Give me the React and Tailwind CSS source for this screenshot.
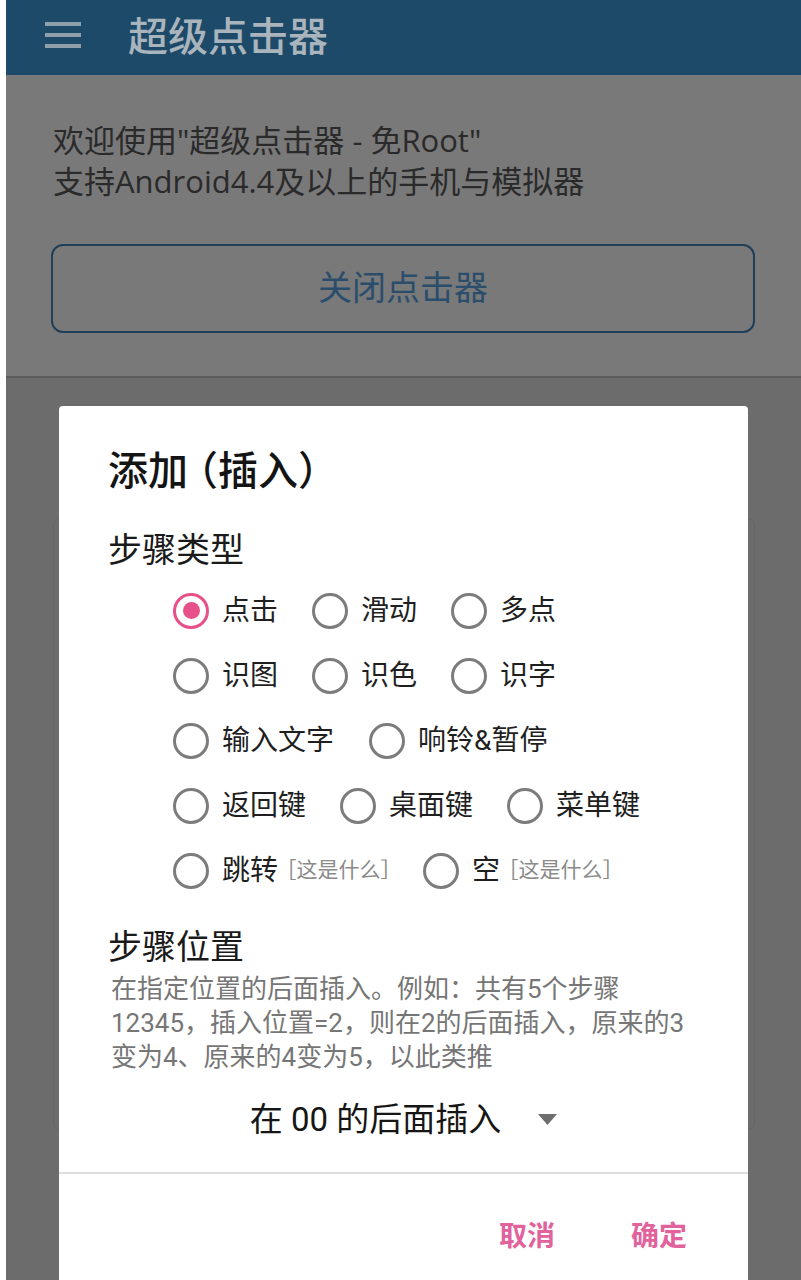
import React from 'react';

const Radio = ({ checked }) => (
  <span
    className={`flex h-[36px] w-[36px] shrink-0 items-center justify-center rounded-full border-[3.5px] ${
      checked ? 'border-[#e8508a]' : 'border-[#7c7c7c]'
    }`}
  >
    {checked && <span className="h-[17px] w-[17px] rounded-full bg-[#e8508a]" />}
  </span>
);

const Option = ({ label, checked, hint }) => (
  <div className="flex items-center">
    <Radio checked={checked} />
    <span className="ml-[13px] text-[28px] leading-none text-[#1f1f1f]">{label}</span>
    {hint && (
      <span className="ml-[8px] text-[21px] leading-none text-[#8a8a8a] [font-feature-settings:'halt']">
        ［这是什么］
      </span>
    )}
  </div>
);

const rows = [
  { gap: 'gap-[34px]', items: [{ label: '点击', checked: true }, { label: '滑动' }, { label: '多点' }] },
  { gap: 'gap-[34px]', items: [{ label: '识图' }, { label: '识色' }, { label: '识字' }] },
  { gap: 'gap-[35px]', items: [{ label: '输入文字' }, { label: '响铃&暂停' }] },
  { gap: 'gap-[34px]', items: [{ label: '返回键' }, { label: '桌面键' }, { label: '菜单键' }] },
  { gap: 'gap-[32px]', items: [{ label: '跳转', hint: true }, { label: '空', hint: true }] },
];

export default function App() {
  return (
    <div className="relative h-[1280px] w-[801px] overflow-hidden bg-white font-['Roboto','Noto_Sans_CJK_SC',sans-serif]">
      {/* page behind the scrim */}
      <div className="ml-[6px] flex h-full flex-col bg-[#6c6c6c]">
        <header className="flex h-[75px] shrink-0 items-start bg-[#1d4a68]">
          <div className="ml-[39px] mt-[22px] flex w-[36px] flex-col gap-[7px]">
            <span className="h-[4px] bg-[#8fa0ab]" />
            <span className="h-[4px] bg-[#8fa0ab]" />
            <span className="h-[4px] bg-[#8fa0ab]" />
          </div>
          <h1 className="ml-[47px] mt-[14px] text-[40px] font-medium leading-[48px] text-[#a9b4bc]">超级点击器</h1>
        </header>

        <section className="border-b-2 border-[#5c5c5c] bg-[#797979] pb-[43px] pl-[47px] pr-[46px] pt-[45px]">
          <div className="font-['Open_Sans','Noto_Sans_CJK_SC',sans-serif] text-[31px] leading-[41px] text-[#2a2a2a]">
            <p>{'欢迎使用"超级点击器 - 免Root"'}</p>
            <p>支持Android4.4及以上的手机与模拟器</p>
          </div>
          <div className="-ml-[2px] mt-[42px] flex h-[89px] items-center justify-center rounded-[12px] border-2 border-[#1f3f58] text-[34px] text-[#2b4d6c]">
            关闭点击器
          </div>
        </section>

        <div className="flex-1">
          <div className="ml-[47px] mr-[46px] mt-[141px] h-[610px] rounded-[6px] border border-[#666666]" />
        </div>
      </div>

      {/* dialog */}
      <div className="absolute bottom-0 left-[59px] top-[406px] flex w-[689px] flex-col rounded-t-[4px] bg-white">
        <div className="pl-[49px] pr-[40px]">
          <h2 className="mt-[42px] text-[40px] font-medium leading-[48px] text-[#141414] [font-feature-settings:'halt']">
            添加<span className="ml-[10px]">（插入）</span>
          </h2>
          <h3 className="mt-[32px] text-[34px] leading-[44px] text-[#1a1a1a]">步骤类型</h3>

          <div className="ml-[65px] mt-[6px]">
            {rows.map((row, i) => (
              <div key={i} className={`flex h-[65px] items-center ${row.gap}`}>
                {row.items.map((it) => (
                  <Option key={it.label} {...it} />
                ))}
              </div>
            ))}
          </div>

          <h3 className="mt-[22px] text-[34px] leading-[44px] text-[#1a1a1a]">步骤位置</h3>
          <div className="ml-[3px] mt-[3px] text-[26px] leading-[34px] text-[#767676]">
            <p>在指定位置的后面插入。例如：共有5个步骤</p>
            <p>12345，插入位置=2，则在2的后面插入，原来的3</p>
            <p>变为4、原来的4变为5，以此类推</p>
          </div>
        </div>

        <div className="mt-[24px] flex h-[44px] items-center justify-center gap-[37px]">
          <span className="text-[33px] leading-[44px] text-[#161616]">在 00 的后面插入</span>
          <svg width="19" height="11" viewBox="0 0 19 11" className="mt-[-2px]">
            <polygon points="0,0 19,0 9.5,11" fill="#6e6e6e" />
          </svg>
        </div>

        <div className="mt-[30px] h-[2px] bg-[#dedede]" />

        <div className="mt-[43px] flex justify-end gap-[76px] pr-[61px]">
          <span className="text-[28px] font-bold leading-[40px] text-[#e2629c]">取消</span>
          <span className="text-[28px] font-bold leading-[40px] text-[#e2629c]">确定</span>
        </div>
      </div>
    </div>
  );
}
